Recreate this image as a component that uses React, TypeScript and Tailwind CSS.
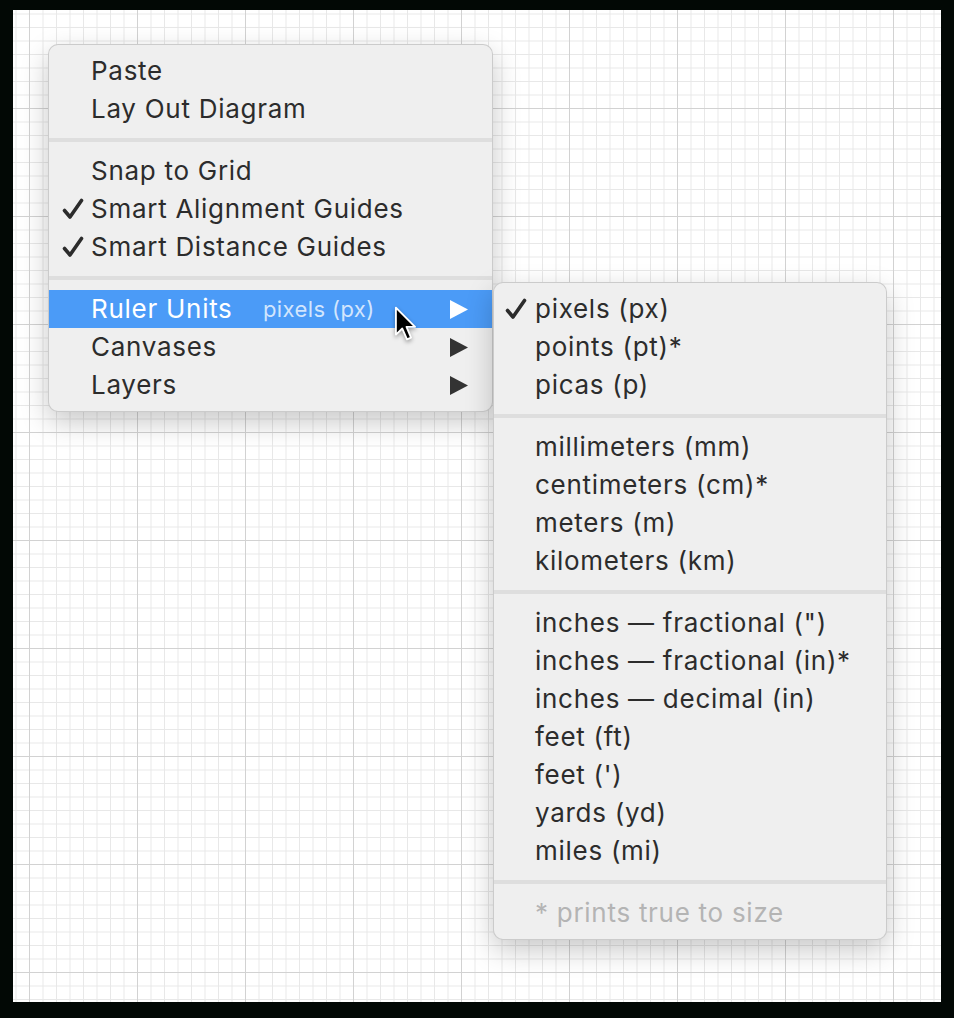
import React from "react";

const font = "font-['Inter','Noto_Sans','Liberation_Sans',sans-serif]";

function Check({ className = "" }: { className?: string }) {
  return (
    <svg viewBox="0 0 22 22" className={`w-[22px] h-[22px] ${className}`}>
      <path d="M2.5 12.5 L8 19 L19.5 2.5" fill="none" stroke="currentColor" strokeWidth="3.6" strokeLinecap="round" strokeLinejoin="round" />
    </svg>
  );
}

function Tri({ className = "" }: { className?: string }) {
  return (
    <svg viewBox="0 0 18 19" className={`w-[18px] h-[19px] ${className}`}>
      <polygon points="0,0 18,9.5 0,19" fill="currentColor" />
    </svg>
  );
}

function Sep() {
  return (
    <div className="py-[10px]">
      <div className="h-[4px] bg-[#dedede]" />
    </div>
  );
}

function Item({
  label,
  checked,
  sub,
  extra,
  highlighted,
  disabled,
  pl,
  checkLeft,
}: {
  label: string;
  checked?: boolean;
  sub?: boolean;
  extra?: string;
  highlighted?: boolean;
  disabled?: boolean;
  pl: string;
  checkLeft: string;
}) {
  const color = highlighted ? "bg-[#4b9bf7] text-white" : disabled ? "text-[#b4b4b4]" : "text-[#2c2c2c]";
  return (
    <div className={`relative flex items-center h-[38px] ${pl} pr-[24px] ${color}`}>
      {checked && (
        <span className={`absolute ${checkLeft} top-[8px]`}>
          <Check />
        </span>
      )}
      <span className="flex-1 flex items-center whitespace-nowrap text-[26px] leading-[38px] tracking-[0.72px]">
        {extra ? (
          <>
            <span className="w-[172px]">{label}</span>
            <span className="text-[22px] tracking-[0.4px] text-white/75">{extra}</span>
          </>
        ) : (
          label
        )}
      </span>
      {sub && <Tri className={highlighted ? "text-white" : "text-[#333333]"} />}
    </div>
  );
}

export default function App() {
  const mainPl = "pl-[42px]";
  const mainCheck = "left-[13px]";
  const subPl = "pl-[41px]";
  const subCheck = "left-[11px]";
  return (
    <div className={`w-[954px] h-[1018px] bg-[#020805] pt-[10px] pl-[13px] pr-[13px] pb-[16px] ${font}`}>
      <div className="relative w-full h-full bg-white bg-[image:linear-gradient(to_right,#d2d2d2_1px,transparent_1px),linear-gradient(to_bottom,#d2d2d2_1px,transparent_1px),linear-gradient(to_right,#e8e8e8_1px,transparent_1px),linear-gradient(to_bottom,#e8e8e8_1px,transparent_1px)] bg-[size:108px_108px,108px_108px,13.5px_13.5px,13.5px_13.5px] bg-[position:16px_98px]">
        {/* main menu */}
        <div className="absolute left-[35px] top-[34px] w-[445px] rounded-[10px] bg-[#efefef] border border-black/15 shadow-[0_10px_28px_rgba(0,0,0,0.22)] py-[7px] overflow-hidden">
          <Item label="Paste" pl={mainPl} checkLeft={mainCheck} />
          <Item label="Lay Out Diagram" pl={mainPl} checkLeft={mainCheck} />
          <Sep />
          <Item label="Snap to Grid" pl={mainPl} checkLeft={mainCheck} />
          <Item label="Smart Alignment Guides" checked pl={mainPl} checkLeft={mainCheck} />
          <Item label="Smart Distance Guides" checked pl={mainPl} checkLeft={mainCheck} />
          <Sep />
          <Item label="Ruler Units" extra="pixels (px)" sub highlighted pl={mainPl} checkLeft={mainCheck} />
          <Item label="Canvases" sub pl={mainPl} checkLeft={mainCheck} />
          <Item label="Layers" sub pl={mainPl} checkLeft={mainCheck} />
        </div>

        {/* submenu */}
        <div className="absolute left-[480px] top-[272px] w-[394px] rounded-[10px] bg-[#efefef] border border-black/15 shadow-[0_10px_28px_rgba(0,0,0,0.22)] py-[7px] overflow-hidden">
          <Item label="pixels (px)" checked pl={subPl} checkLeft={subCheck} />
          <Item label="points (pt)*" pl={subPl} checkLeft={subCheck} />
          <Item label="picas (p)" pl={subPl} checkLeft={subCheck} />
          <Sep />
          <Item label="millimeters (mm)" pl={subPl} checkLeft={subCheck} />
          <Item label="centimeters (cm)*" pl={subPl} checkLeft={subCheck} />
          <Item label="meters (m)" pl={subPl} checkLeft={subCheck} />
          <Item label="kilometers (km)" pl={subPl} checkLeft={subCheck} />
          <Sep />
          <Item label={'inches \u2014 fractional (")'} pl={subPl} checkLeft={subCheck} />
          <Item label="inches — fractional (in)*" pl={subPl} checkLeft={subCheck} />
          <Item label="inches — decimal (in)" pl={subPl} checkLeft={subCheck} />
          <Item label="feet (ft)" pl={subPl} checkLeft={subCheck} />
          <Item label="feet (')" pl={subPl} checkLeft={subCheck} />
          <Item label="yards (yd)" pl={subPl} checkLeft={subCheck} />
          <Item label="miles (mi)" pl={subPl} checkLeft={subCheck} />
          <Sep />
          <Item label="* prints true to size" disabled pl={subPl} checkLeft={subCheck} />
        </div>

        {/* cursor */}
        <svg viewBox="0 0 14 22" className="absolute left-[381px] top-[296px] w-[24px] h-[37px] drop-shadow-[0_2px_2px_rgba(0,0,0,0.35)]">
          <path d="M1 1 L1 17 L4.8 13.4 L7.6 19.8 L10 18.8 L7.3 12.4 L12.4 12.4 Z" fill="#000" stroke="#fff" strokeWidth="1.1" strokeLinejoin="round" />
        </svg>
      </div>
    </div>
  );
}
